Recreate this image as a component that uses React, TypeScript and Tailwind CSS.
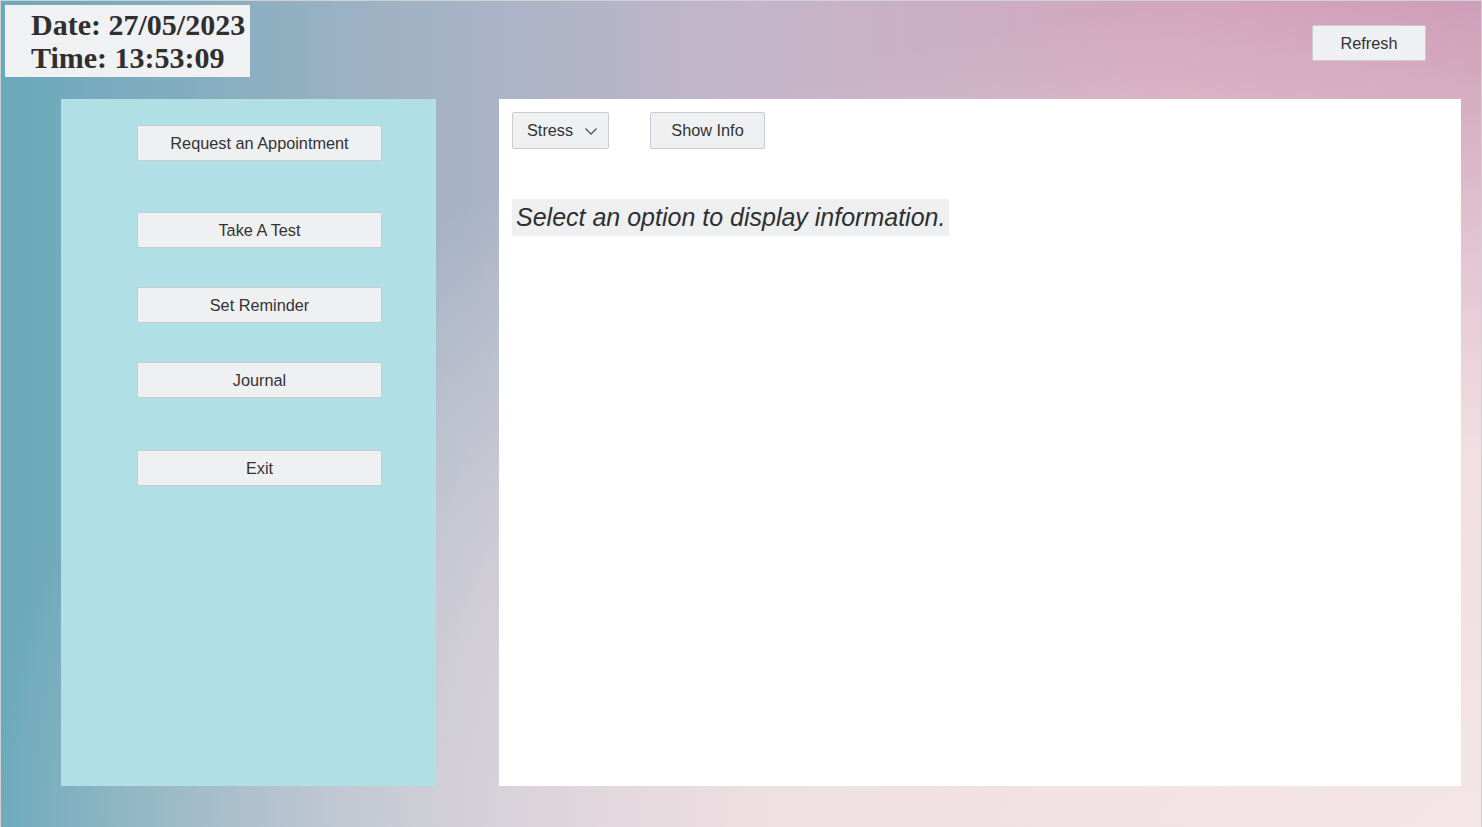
import { useState } from "react";

const btn =
  "flex items-center justify-center bg-[#eff0f2] border border-[#c9cbce] rounded-[2px] text-[16.3px] text-[#333] font-['Liberation_Sans',Arial,sans-serif]";

const App = () => {
  const [topic, setTopic] = useState("Stress");

  return (
    <div className="w-[1482px] h-[827px] overflow-hidden border border-[#cfd0d2] border-b-0 bg-[image:radial-gradient(ellipse_at_100%_100%,#f4e5e6_0%,rgba(244,229,230,0.92)_32%,rgba(244,229,230,0.55)_50%,rgba(244,229,230,0)_72%),linear-gradient(to_right,#69a9ba_0%,#9db2c4_25%,#c4b6c9_50%,#d3a6bc_80%,#cc9bb6_100%)]">
      <div className="flex justify-between h-[98px]">
        <div className="ml-[4px] mt-[4px] w-[245px] h-[72px] bg-[#f0f1f3] pl-[26px] pt-[3px] font-['Liberation_Serif','Times_New_Roman',serif] font-bold text-[30px] leading-[33px] text-[#2f2f2f]">
          <div>Date: 27/05/2023</div>
          <div>Time: 13:53:09</div>
        </div>
        <button className={`${btn} mt-[24px] mr-[55px] w-[114px] h-[36px]`}>
          Refresh
        </button>
      </div>

      <div className="flex pl-[60px]">
        <div className="w-[375px] h-[687px] bg-[#b0dfe5] pl-[76px] pt-[26px] flex flex-col">
          <button className={`${btn} w-[245px] h-[36px]`}>Request an Appointment</button>
          <button className={`${btn} w-[245px] h-[36px] mt-[51px]`}>Take A Test</button>
          <button className={`${btn} w-[245px] h-[36px] mt-[39px]`}>Set Reminder</button>
          <button className={`${btn} w-[245px] h-[36px] mt-[39px]`}>Journal</button>
          <button className={`${btn} w-[245px] h-[36px] mt-[52px]`}>Exit</button>
        </div>

        <div className="ml-[63px] w-[962px] h-[687px] bg-white pl-[13px] pt-[13px]">
          <div className="flex gap-[41px]">
            <button
              className={`${btn} w-[97px] h-[37px] justify-start pl-[14px] gap-[11px]`}
              onClick={() => setTopic("Stress")}
            >
              <span>{topic}</span>
              <svg width="14" height="14" viewBox="0 0 14 14" fill="none">
                <path d="M1.5 4.5 L7 10 L12.5 4.5" stroke="#555" strokeWidth="1.3" />
              </svg>
            </button>
            <button className={`${btn} w-[115px] h-[37px]`}>Show Info</button>
          </div>
          <div className="mt-[50px] inline-block bg-[#eeeff1] h-[37px] pl-[4px] pr-[4px] font-['Liberation_Sans',Arial,sans-serif] italic text-[25px] leading-[37px] text-[#2f2f2f]">
            Select an option to display information.
          </div>
        </div>
      </div>
    </div>
  );
};

export default App;
